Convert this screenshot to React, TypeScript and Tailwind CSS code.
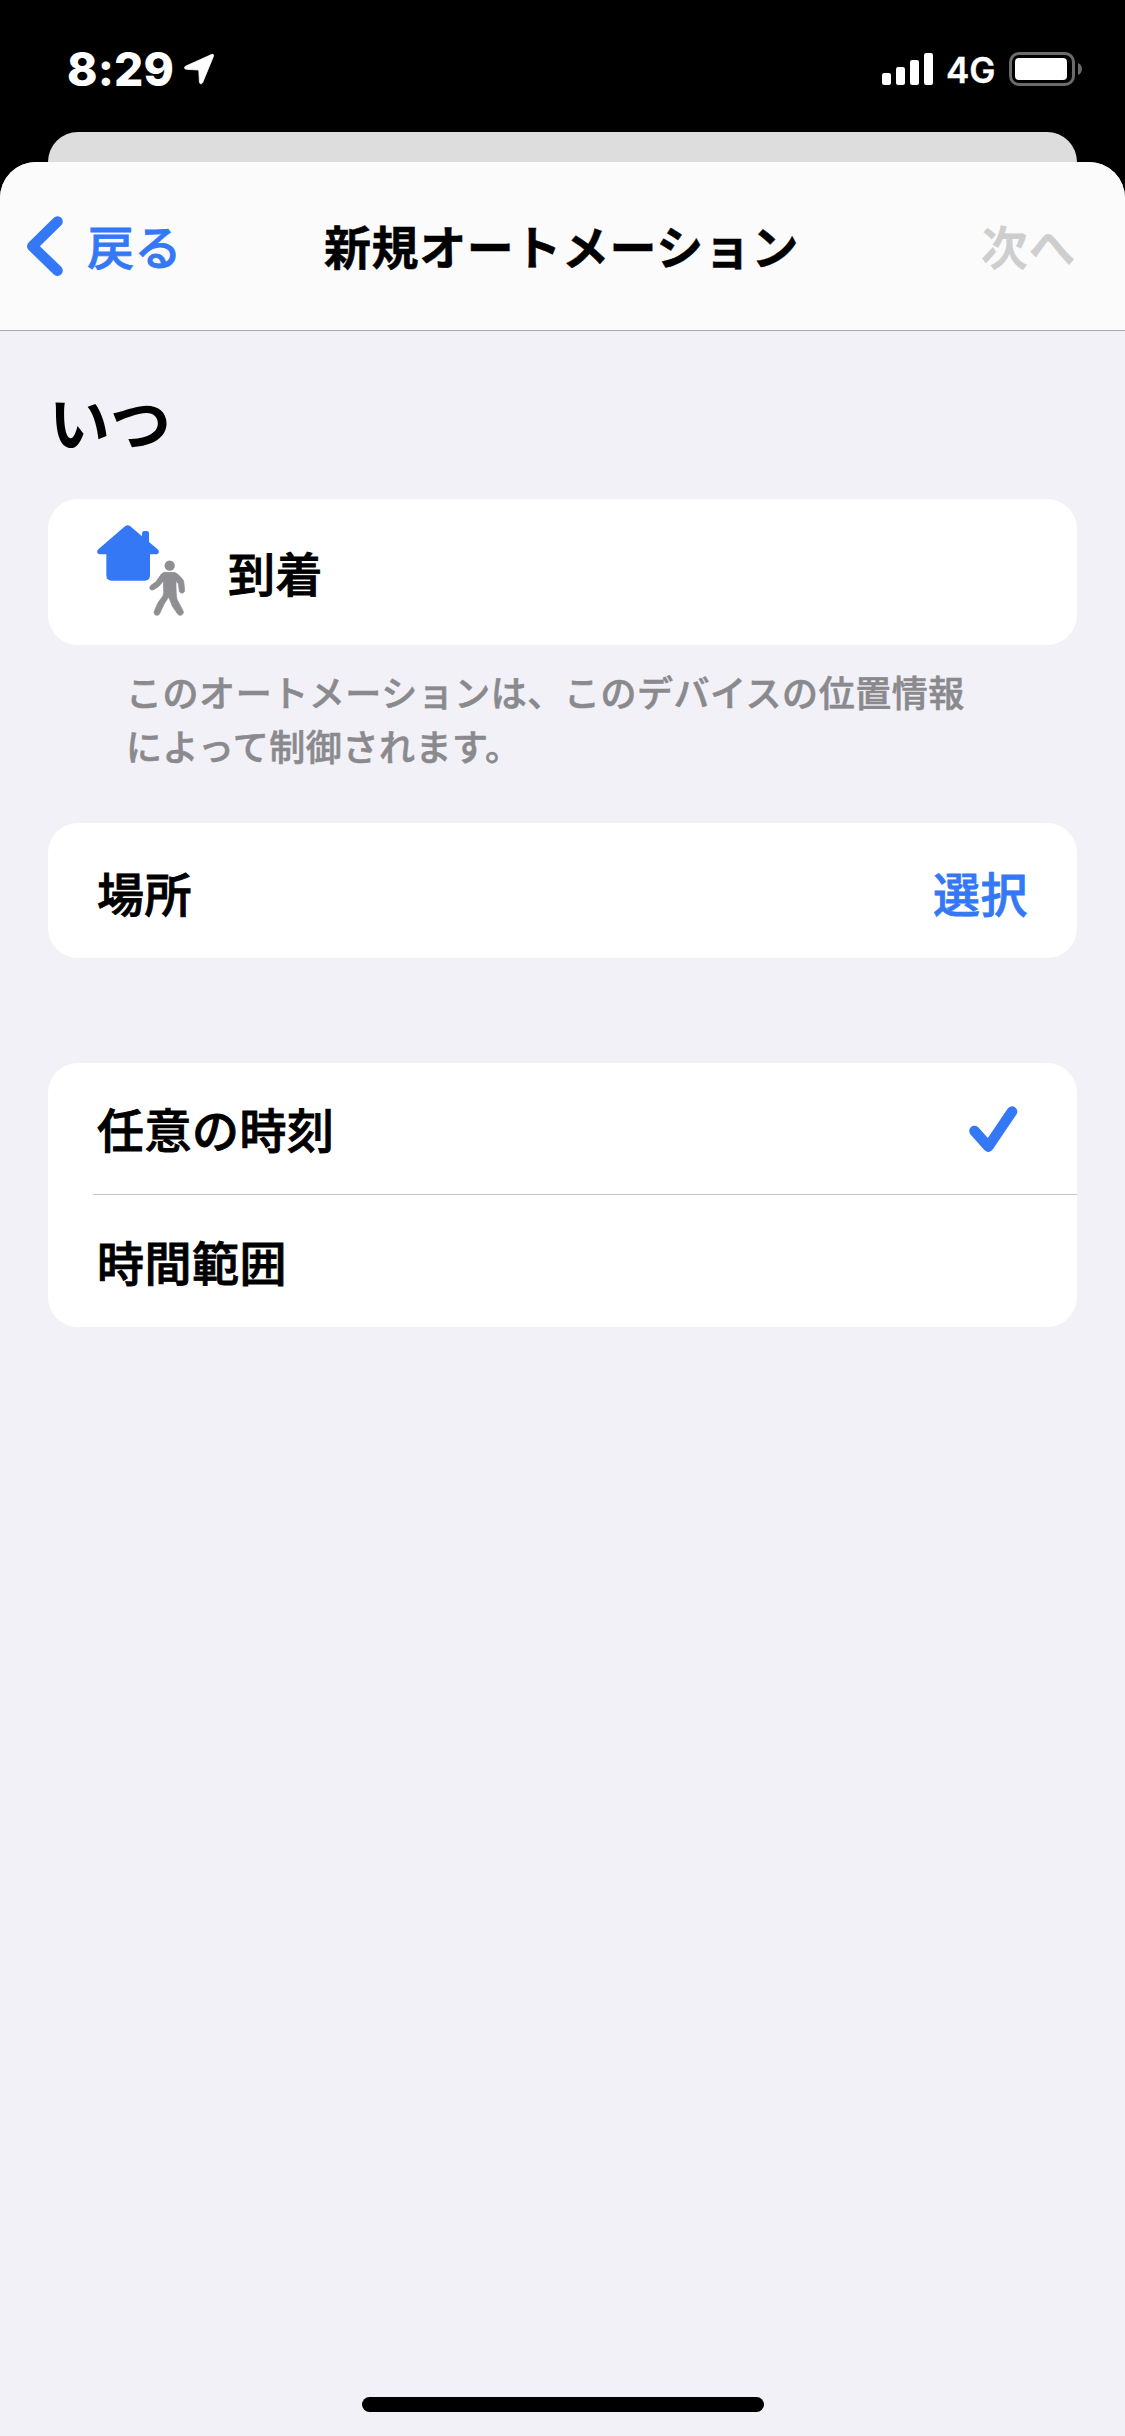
import React from "react";

type RowProps = {
  label: string;
  className?: string;
  labelClass?: string;
  children?: React.ReactNode;
};

function StatusBar() {
  return (
    <div className="flex h-[132px] items-start justify-between pt-[52px] pr-[42px] pl-[67px] text-white">
      <div className="flex items-start">
        <div className="w-[107px] font-[Inter] text-[46px] leading-[34px] font-extrabold tracking-[0.1px]">8:29</div>
        <svg className="mt-[1px] ml-[10px]" width="32" height="32" viewBox="0 0 32 32" fill="currentColor">
          <path stroke="currentColor" strokeWidth="0.8" d="M27.4 1.6 2 13C-.2 14 .2 16.2 2.4 16.3L14.8 17 15.4 29C15.6 31.2 17.8 31.4 18.7 29.4L29.4 3.4C30 1.8 29 .9 27.4 1.6Z" />
        </svg>
      </div>
      <div className="flex items-start">
        <svg width="52" height="34" viewBox="0 0 52 34" fill="currentColor">
          <rect x="0" y="21" width="9" height="12" rx="2.2" />
          <rect x="14" y="15" width="9" height="18" rx="2.2" />
          <rect x="28" y="8" width="9" height="25" rx="2.2" />
          <rect x="42" y="1" width="9" height="32" rx="2.2" />
        </svg>
        <div className="ml-[12px] w-[50px] font-[Inter] text-[35px] leading-[36px] font-semibold [-webkit-text-stroke:0.3px]">4G</div>
        <svg className="ml-[13px]" width="74" height="34" viewBox="0 0 74 34">
          <rect x="1.5" y="1.5" width="63" height="31" rx="8.5" fill="none" stroke="#6b6b6b" strokeWidth="3" />
          <rect x="6" y="6" width="52" height="22" rx="4" fill="#fff" />
          <path d="M69 11C74.3 13 74.3 21 69 23Z" fill="#6b6b6b" />
        </svg>
      </div>
    </div>
  );
}

function NavBar() {
  return (
    <div className="grid h-[169px] grid-cols-[1fr_auto_1fr] items-center rounded-t-[36px] border-b border-[#a9a9ac] bg-[#fbfbfc] text-[47px] leading-[60px] tracking-[0.6px]">
      <div className="flex items-center pl-[26px] font-medium text-[#3478f6]">
        <svg width="38" height="60" viewBox="0 0 38 60" fill="none" stroke="currentColor" strokeWidth="10.6" strokeLinecap="round" strokeLinejoin="round">
          <path d="M31.5 5.5 6.3 30.2 31.5 54.6" />
        </svg>
        <span className="mb-[3px] ml-[23px] [-webkit-text-stroke:0.8px]">戻る</span>
      </div>
      <div className="mr-[2px] mb-[3px] font-bold [-webkit-text-stroke:0.5px]">新規オートメーション</div>
      <div className="mb-[3px] pr-[49px] text-right font-bold text-[#cececf]">次へ</div>
    </div>
  );
}

function ArriveIcon() {
  return (
    <svg className="mb-[4px]" width="88" height="93" viewBox="36 42 264 279">
      <path
        fill="#3478f6"
        d="M120 49Q128 42 136 49L171 79V70Q171 63 178 63H185Q192 63 192 70V96L218 118Q223 123 221 128T212 133H195V196Q195 212 179 212H80Q64 212 64 196V133H47Q39 133 37 128T40 118Z"
      />
      <g fill="#8e8e93">
        <circle cx="254" cy="167" r="15.5" />
        <path stroke="#8e8e93" strokeWidth="2" d="M238 187H268C276 189 294 206 296 214L299 239C300 251 285 253 283 243L280 221 273 214C273 232 273 254 276 268L294 302C299 313 285 321 278 312L262 289 251 261 238 281 224 311C218 321 204 315 208 303L218 280C225 267 235 261 236 248L235 213 222 229 206 239C195 244 190 231 199 225L212 216 225 198C229 192 233 188 238 187Z" />
      </g>
    </svg>
  );
}

function Row({ label, className = "", labelClass = "", children }: RowProps) {
  return (
    <div className={`flex items-center justify-between ${className}`}>
      <div className={`text-[47px] leading-[60px] font-medium tracking-[0.5px] [-webkit-text-stroke:0.9px] ${labelClass}`}>{label}</div>
      {children}
    </div>
  );
}

function App() {
  return (
    <div className="flex h-[2436px] w-[1125px] flex-col bg-black font-['Noto_Sans_CJK_JP',sans-serif] text-black" lang="ja">
      <StatusBar />
      <div className="mx-[48px] h-[30px] rounded-t-[30px] bg-[#dddddd]" />
      <div className="flex flex-1 flex-col rounded-t-[36px] bg-[#f2f1f7]">
        <NavBar />
        <div className="px-[48px]">
          <h1 className="mt-[50px] ml-[1px] text-[61px] leading-[80px] font-bold">いつ</h1>

          <div className="mt-[38px] flex h-[146px] items-center rounded-[30px] bg-white pl-[49px]">
            <ArriveIcon />
            <div className="mb-[1px] ml-[43px] text-[47px] leading-[60px] font-medium tracking-[0.5px] [-webkit-text-stroke:0.9px]">到着</div>
          </div>
          <p className="mt-[19px] ml-[78px] text-[36px] leading-[54px] font-medium tracking-[0.55px] whitespace-nowrap text-[#8a8a8e] [-webkit-text-stroke:0.6px]">
            このオートメーションは、このデバイスの位置情報
            <br />
            によって制御されます。
          </p>

          <div className="mt-[51px] rounded-[30px] bg-white">
            <Row label="場所" className="h-[135px] px-[49px]" labelClass="mt-[2px]">
              <div className="mt-[2px] text-[47px] leading-[60px] font-medium tracking-[0.5px] text-[#3478f6] [-webkit-text-stroke:0.8px]">選択</div>
            </Row>
          </div>

          <div className="mt-[105px] rounded-[30px] bg-white">
            <Row label="任意の時刻" className="h-[131px] pr-[59px] pl-[49px]" labelClass="mb-[1px]">
              <svg width="50" height="48" viewBox="0 0 50 48" fill="none" stroke="#3478f6" strokeWidth="10.6" strokeLinecap="round" strokeLinejoin="round">
                <path d="M6.5 26 20.3 41.6 44 6.6" />
              </svg>
            </Row>
            <div className="ml-[45px] h-px bg-[#c3c3c6]" />
            <Row label="時間範囲" className="h-[132px] px-[49px]" labelClass="mb-[1px]" />
          </div>
        </div>
        <div className="mx-auto mt-auto mb-[24px] h-[15px] w-[402px] rounded-full bg-black" />
      </div>
    </div>
  );
}

export default App;
